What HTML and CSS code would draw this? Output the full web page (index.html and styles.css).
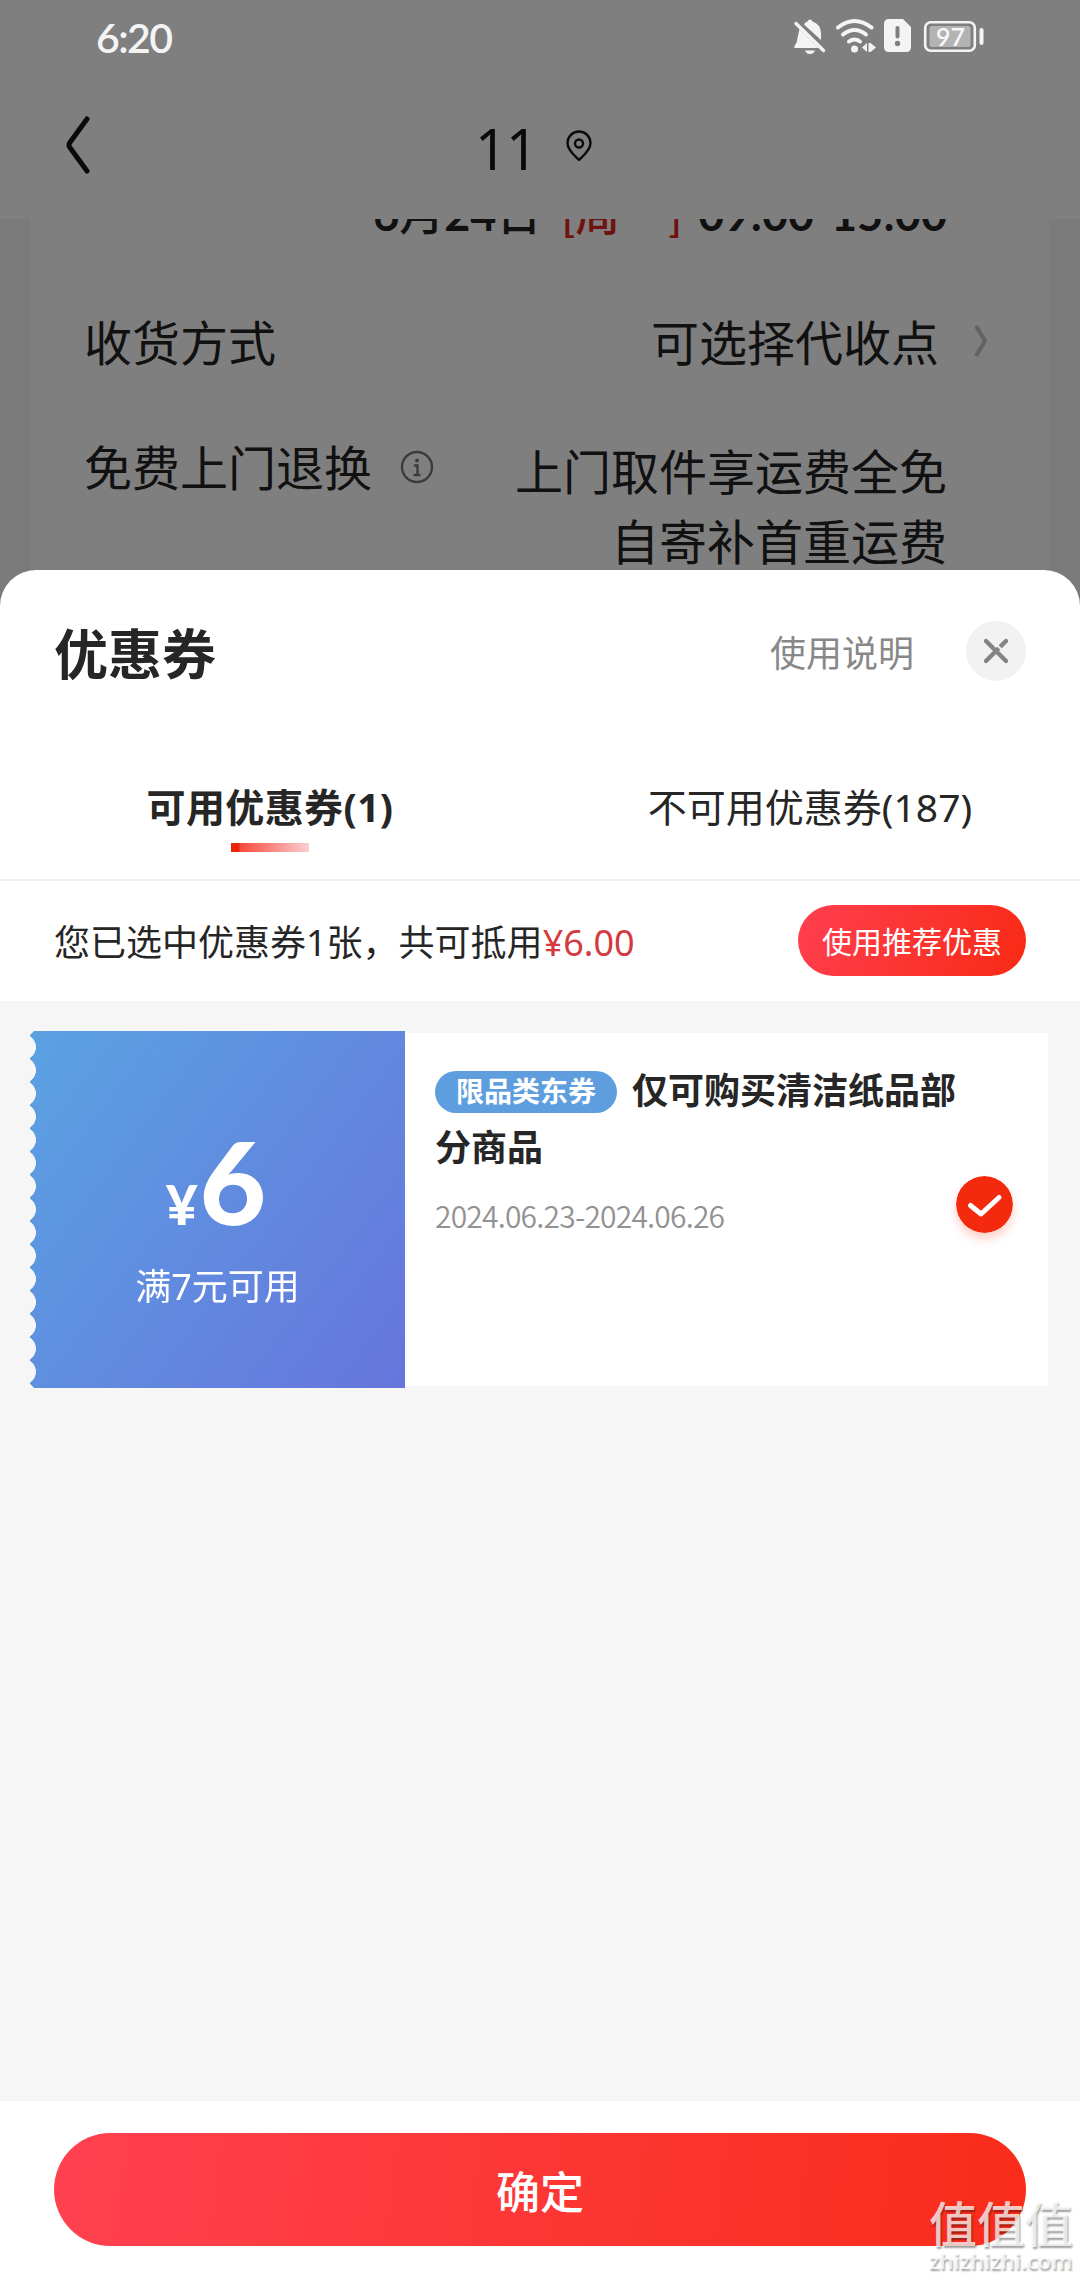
FILE: index.html
```html
<!DOCTYPE html>
<html lang="zh-CN">
<head>
<meta charset="utf-8">
<meta name="viewport" content="width=1080">
<title>优惠券</title>
<link rel="stylesheet" href="styles.css">
</head>
<body>
<div class="screen">
  <div class="status">
    <span class="status-time">6:20</span>
    <svg class="status-icons" width="194" height="40" viewBox="792 16 194 40">
      <g fill="#f4f4f4">
        <path d="M799.500 29 L818.500 48 H796 Q793.500 48 794.500 46 Q797.500 42 797.500 38 Z"/>
        <path d="M804 24.500 Q804.500 22.500 807.500 21.500 Q808 19.500 810 19.500 Q812 19.500 812.500 21.500 Q820.500 24 821 33 V40 Z"/>
        <path d="M805 50.500 H815 Q813.500 54 810 54 Q806.500 54 805 50.500 Z"/>
        <circle cx="854.500" cy="49" r="3.500"/>
        <path d="M862 47.500 L867 43 V52 Z M868.500 43 H870.500 L876 47.500 L870.500 52 H868.500 Z"/>
        <path d="M889 19 H903 L911 27 V47 Q911 52 906 52 H889 Q884 52 884 47 V24 Q884 19 889 19 Z"/>
        <rect x="979.500" y="28" width="4" height="17" rx="2"/>
      </g>
      <g fill="none" stroke="#f4f4f4" stroke-linecap="round">
        <path d="M796 23.500 L823.500 50.500" stroke-width="3.400"/>
        <path d="M838 27.500 Q854.500 14.500 871.500 27.500" stroke-width="4"/>
        <path d="M843 34.500 Q854.500 25.500 866 34.500" stroke-width="4"/>
        <path d="M849 41.500 Q854.500 37.500 860 41.500" stroke-width="4"/>
        <rect x="925.200" y="22.200" width="49.600" height="28.600" rx="5.500" stroke-width="2.600"/>
      </g>
      <rect x="929.500" y="26" width="41" height="21" rx="2.500" fill="#b3b3b3"/>
      <path d="M897.500 28 V36.500" stroke="#808080" stroke-width="4" stroke-linecap="round"/>
      <circle cx="897.500" cy="43.500" r="2.700" fill="#808080"/>
      <text class="battery-text" x="950.500" y="46" text-anchor="middle">97</text>
    </svg>
  </div>

  <div class="page">
    <header class="nav">
      <svg class="nav-back" width="26" height="62" viewBox="0 0 26 62" fill="none" stroke="#151515" stroke-width="5" stroke-linecap="round" stroke-linejoin="round"><path d="M23 5 L5.500 29 Q4.500 31 5.500 33 L23 57"/></svg>
      <span class="nav-title">11</span>
      <svg class="nav-pin" width="30" height="34" viewBox="0 0 30 34" fill="none" stroke="#151515" stroke-width="2.400" stroke-linejoin="round"><path d="M15 31 C11 27 3.500 21.500 3.500 14 A11.500 11.500 0 0 1 26.500 14 C26.500 21.500 19 27 15 31 Z"/><circle cx="15" cy="14.500" r="4"/></svg>
    </header>
    <section class="order">
      <div class="order-time">
        <span class="t-date">6<span class="cjk">月</span>24<span class="cjk">日</span></span><span class="t-day cjk">[周</span><span class="t-day t-close cjk">]</span><span class="t-hours">09:00-15:00</span>
      </div>
      <div class="order-row">
        <span>收货方式</span>
        <span class="order-value">可选择代收点
          <svg width="16" height="34" viewBox="0 0 16 34" fill="none" stroke="#c4c4c4" stroke-width="4"><path d="M3 2 L12 17 L3 32"/></svg>
        </span>
      </div>
      <div class="order-row order-refund">
        <span class="order-label">免费上门退换
          <svg width="34" height="34" viewBox="0 0 34 34" fill="none" stroke="#777" stroke-width="2.400"><circle cx="17" cy="17" r="15"/><circle cx="17" cy="10.500" r="1.900" fill="#777" stroke="none"/><path d="M14 15.500 H17.500 V24.500 M13.500 25 H20.500"/></svg>
        </span>
        <span class="order-lines">上门取件享运费全免<br>自寄补首重运费</span>
      </div>
    </section>
  </div>
  <div class="mask"></div>

  <main class="sheet">
    <header class="sheet-head">
      <h1>优惠券</h1>
      <span class="help">使用说明</span>
      <svg class="close" width="60" height="60" viewBox="0 0 60 60"><circle cx="30" cy="30" r="30" fill="#f2f2f2"/><path d="M20 20 L40 40 M20 40 L40 20" stroke="#848484" stroke-width="4.400" stroke-linecap="round"/><path d="M31.500 24.500 L35.500 28.500" stroke="#f2f2f2" stroke-width="1.800"/></svg>
    </header>
    <nav class="tabs">
      <span class="tab tab-active">可用优惠券(1)</span>
      <span class="tab">不可用优惠券(187)</span>
    </nav>
    <div class="summary">
      <span>您已选中优惠券<span class="count">1</span>张，共可抵用<span class="amount">¥6.00</span></span>
      <button class="recommend">使用推荐优惠</button>
    </div>
    <div class="list">
      <article class="coupon">
        <div class="coupon-value">
          <div class="price"><span class="yen">¥</span><span class="num">6</span></div>
          <div class="condition">满7元可用</div>
        </div>
        <div class="coupon-info">
          <div class="coupon-text">
            <h2><span class="badge">限品类东券</span>仅可购买清洁纸品部<br>分商品</h2>
            <p>2024.06.23-2024.06.26</p>
          </div>
          <svg class="check" width="57" height="57" viewBox="0 0 57 57"><circle cx="28.500" cy="28.500" r="28.500" fill="#f42a0e"/><path d="M14.500 29.500 L25 38 L43 21.500" fill="none" stroke="#fff" stroke-width="5" stroke-linecap="round" stroke-linejoin="round"/></svg>
        </div>
      </article>
    </div>
    <footer class="footer"><button class="confirm">确定</button></footer>
  </main>
  <div class="watermark"><div class="wm-name">值值值</div><div class="wm-site">zhizhizhi.com</div></div>
</div>
</body>
</html>
```
FILE: styles.css
```css
* { box-sizing: border-box; }
body { margin: 0; font-family: "Noto Sans", "Noto Sans CJK SC", sans-serif; color: #262626; }
h1, h2, p { margin: 0; }
button { border: 0; padding: 0; font-family: inherit; color: #fff; }
svg { display: block; flex: none; }

.screen { position: relative; width: 1080px; height: 2280px; overflow: hidden; background: #f5f5f5; }

/* system status bar, above the dimmed page */
.status { position: absolute; z-index: 2; top: 0; left: 0; width: 1080px; height: 76px; padding: 0 94px 0 96px; display: flex; justify-content: space-between; align-items: center; color: #f4f4f4; }
.status-time { font: 600 41px/76px Lato, sans-serif; letter-spacing: -1.600px; }
.status-icons { margin-top: -4px; }
.battery-text { font: 600 25px Lato, sans-serif; fill: #f8f8f8; }

.page { height: 600px; }
.nav { height: 219px; padding-top: 76px; background: #fff; display: grid; grid-template-columns: 411px 92px auto; align-items: center; padding-left: 64px; color: #151515; }
.nav-back { margin-top: -6px; }
.nav-title { font-size: 56px; line-height: 60px; letter-spacing: -1px; }
.nav-pin { margin: -3px 0 0 -3px; }
.order { width: 1019px; height: 381px; margin-left: 30px; padding: 0 102px 0 54px; background: #fff; overflow: hidden; font-size: 48px; line-height: 70px; color: #222; }
.order-time { height: 50px; margin-top: -30px; display: flex; justify-content: flex-end; font: 700 45px/50px Lato, "Noto Sans CJK SC", sans-serif; white-space: nowrap; }
.cjk { font-weight: 500; }
.t-day { color: #e1251b; margin-left: 20px; }
.t-close { margin-left: 48px; }
.t-hours { margin-left: 16px; }
.order-row { display: flex; justify-content: space-between; margin-top: 69px; white-space: nowrap; }
.order-value, .order-label { display: flex; align-items: center; }
.order-value { gap: 34px; margin-right: -42px; }
.order-value svg { margin-top: -5px; }
.order-label { gap: 28px; height: 70px; margin-top: -4px; }
.order-label svg { margin-top: -2px; }
.order-refund { margin-top: 59px; }
.order-lines { text-align: right; }
.mask { position: absolute; inset: 0; background: rgba(0, 0, 0, .5); }

/* coupon sheet */
.sheet { position: absolute; top: 570px; left: 0; width: 1080px; height: 1710px; display: flex; flex-direction: column; background: #fff; border-radius: 36px 36px 0 0; overflow: hidden; }
.sheet-head { height: 162px; padding: 0 54px; display: flex; align-items: center; }
.sheet-head h1 { flex: 1; font-size: 54px; line-height: 60px; font-weight: 700; padding-top: 5px; }
.help { font-size: 36px; color: #888; margin-right: 52px; }
.tabs { height: 149px; border-bottom: 2px solid #f0f0f0; display: grid; grid-template-columns: 1fr 1fr; justify-items: center; padding-top: 47px; }
.tab { font-size: 39px; line-height: 56px; }
.tab-active { font-weight: 700; letter-spacing: .4px; display: flex; flex-direction: column; align-items: center; }
.tab-active::after { content: ""; width: 78px; height: 9px; margin-top: 8px; background: linear-gradient(90deg, #ea250f 0 8px, #fa4a3c 9px, #f9cfd2); }
.summary { height: 120px; padding: 0 54px 2px; display: flex; align-items: center; justify-content: space-between; font-size: 36px; }
.amount { color: #d33b41; }
.recommend { width: 228px; height: 71px; border-radius: 36px; font-size: 30px; background: linear-gradient(110deg, #ff3f50, #f92a14); }
.list { flex: 1; background: #f6f6f6; padding: 30px 32px 0 30px; }
.coupon { display: flex; align-items: center; height: 357px; }
.coupon-value { width: 375px; height: 357px; border-radius: 4px 0 0 4px; color: #fff; background: linear-gradient(127deg, #5aa2e2, #6775dc); text-align: center; padding-top: 88px; -webkit-mask: radial-gradient(circle at -7px 50%, transparent 12.600px, #000 13.200px) 0 4.500px / 100% 23.200px; }
.price { display: flex; justify-content: center; align-items: baseline; height: 122px; line-height: 122px; padding-right: 5px; font-family: Lato, sans-serif; font-weight: 900; }
.yen { font-size: 55px; margin-right: 2px; }
.num { font-size: 115px; letter-spacing: -2px; }
.condition { font-size: 36px; line-height: 54px; margin-top: 19px; }
.coupon-info { width: 643px; height: 353px; padding: 0 36px 0 30px; background: #fff; display: flex; justify-content: space-between; }
.coupon-text { padding-top: 29px; white-space: nowrap; }
.coupon-text h2 { font-size: 36px; line-height: 57px; font-weight: 700; }
.badge { display: inline-block; width: 182px; height: 42px; margin-right: 15px; border-radius: 21px; background: #5e9ede; color: #fff; font-size: 28px; line-height: 41px; text-align: center; vertical-align: 2px; }
.coupon-text p { font: 350 30px/40px "Noto Sans CJK SC", sans-serif; color: #929292; margin-top: 19px; letter-spacing: -.800px; }
.check { margin-top: 143px; border-radius: 50%; box-shadow: 0 6px 10px rgba(244, 42, 14, .22); }
.footer { height: 179px; padding: 32px 54px; background: #fff; }
.confirm { width: 972px; height: 113px; border-radius: 57px; background: linear-gradient(97deg, #ff4150, #fa2c19); font-size: 44px; font-weight: 500; }

/* site mark over the lower right corner */
.watermark { position: absolute; right: 8px; bottom: 6px; width: 143px; color: rgba(255, 255, 255, .76); text-shadow: 1px 2px 2px rgba(0, 0, 0, .38); white-space: nowrap; }
.wm-name { font: 500 48px/54px "Noto Sans CJK SC", sans-serif; }
.wm-site { font: 600 22px/27px "Open Sans", sans-serif; margin-top: -1px; }
```
